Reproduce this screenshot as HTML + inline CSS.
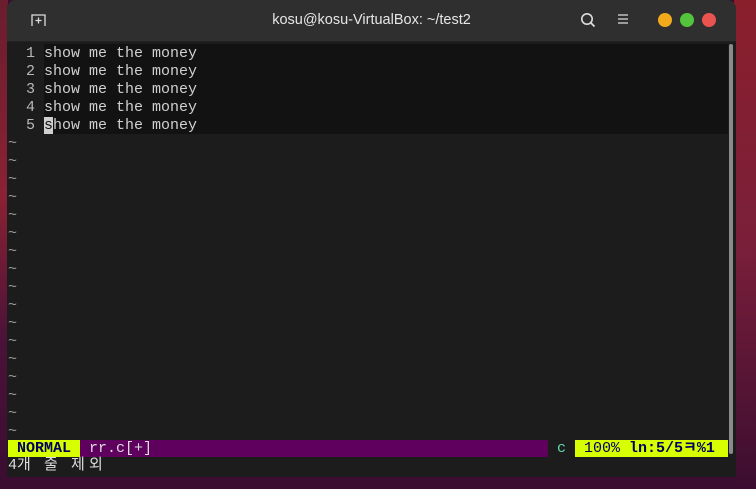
<!DOCTYPE html><html><head><meta charset="utf-8"><style>
body{margin:0;width:756px;height:489px;overflow:hidden;background:#3b0d30;position:relative;font-family:"Liberation Mono","Noto Sans CJK KR",monospace;}
#lft{position:absolute;left:0;top:0;width:8px;height:489px;background:linear-gradient(#6a1d2e,#8a2233 40%,#4a1238 70%,#3b0d30)}
#rt{position:absolute;right:0;top:0;width:22px;height:489px;background:linear-gradient(#8a1f2c,#7a1f3a 50%,#3b0d30)}
#win{position:absolute;left:7px;top:0;width:729px;height:477px;background:#1c1c1c;border-radius:9px 9px 0 0;overflow:hidden}
#tb{height:41px;background:#2f2f2f;border-bottom:1px solid #222;position:relative;color:#ddd;font-family:"Liberation Sans",sans-serif;font-size:14.5px}
.t{position:absolute;left:0;right:0;top:12px;text-align:center;color:#e6e6e6}
.dot{position:absolute;top:13px;width:14px;height:14px;border-radius:50%}
.row{position:absolute;left:1px;height:18px;line-height:18px;font-size:15px;color:#d0d0d0;white-space:pre}
.ln{color:#b8b8b8}
.k{display:inline-block;width:18px}
#sb{position:absolute;left:722px;top:44px;width:4px;height:410px;background:#8a8a8a;border-radius:2px}
</style></head><body><div id="lft"></div><div id="rt"></div>
<div id="win"><div id="tb">
<svg style="position:absolute;left:24px;top:13px" width="16" height="14"><path d="M1 13V2h13v11" fill="none" stroke="#ddd" stroke-width="1.3"/><path d="M7.5 4.5v6M4.5 7.5h6" stroke="#ddd" stroke-width="1.3"/></svg>
<div class="t">kosu@kosu-VirtualBox: ~/test2</div>
<svg style="position:absolute;left:573px;top:12px" width="16" height="16"><circle cx="7" cy="7" r="5.2" fill="none" stroke="#ddd" stroke-width="1.6"/><path d="M11 11l3.5 3.5" stroke="#ddd" stroke-width="1.8"/></svg>
<svg style="position:absolute;left:610px;top:13px" width="12" height="12"><path d="M1 2h10M1 6h10M1 10h10" stroke="#ddd" stroke-width="1.3"/></svg>
<div class="dot" style="left:651px;background:#f2a91c"></div>
<div class="dot" style="left:673px;background:#54c43c"></div>
<div class="dot" style="left:695px;background:#ea5450"></div>
</div>
<div style="position:absolute;left:37px;top:44px;width:684px;height:90px;background:#121212"></div>
<div class="row" style="top:45px"><span class="ln">  1 </span>show me the money</div>
<div class="row" style="top:63px"><span class="ln">  2 </span>show me the money</div>
<div class="row" style="top:81px"><span class="ln">  3 </span>show me the money</div>
<div class="row" style="top:99px"><span class="ln">  4 </span>show me the money</div>
<div class="row" style="top:117px"><span class="ln">  5 </span><span style="background:#d0d0d0;color:#121212">s</span>how me the money</div>
<div class="row" style="top:135px;left:1px;line-height:18px;color:#9a9a9a">~
~
~
~
~
~
~
~
~
~
~
~
~
~
~
~
~</div>
<div style="position:absolute;left:1px;top:440px;width:720px;height:17px;background:#5f005f"></div>
<div class="row" style="top:440px;height:17px;line-height:17px;left:1px;width:72px;background:#d7ff00;color:#00005f;font-weight:bold"> NORMAL</div>
<div class="row" style="top:440px;height:17px;line-height:17px;left:82px;color:#ddd">rr.c[+]</div>
<div class="row" style="top:440px;height:17px;line-height:17px;left:541px;width:27px;background:#1c1c1c;color:#5fd7af"> c</div>
<div class="row" style="top:440px;height:17px;line-height:17px;left:568px;width:153px;background:#d7ff00;color:#00005f"> 100% <b>ln:5/5ㅋ%1</b></div>
<div class="row" style="top:457px;left:1px;color:#ddd">4<span class="k">개</span> <span class="k">줄</span> <span class="k">제</span><span class="k">외</span></div>
<div id="sb"></div>
</div></body></html>
